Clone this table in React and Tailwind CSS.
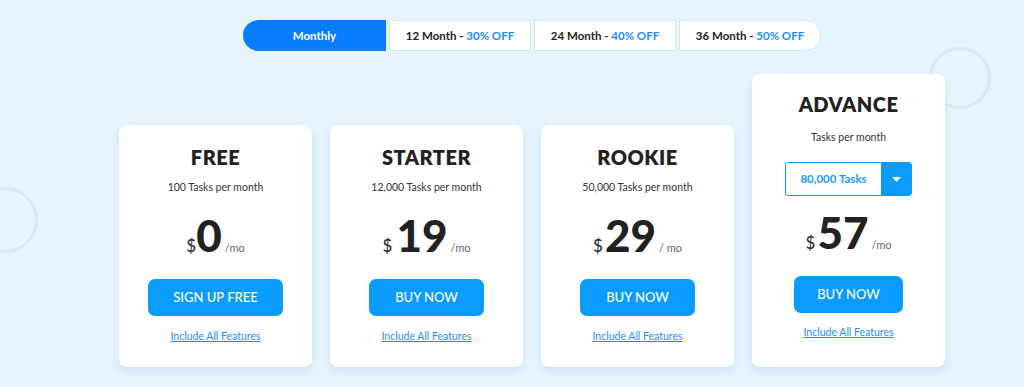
import React from "react"

function Price({ amount, dollarGap = "", per = "/mo" }) {
  return (
    <div className="flex items-baseline h-[44px] leading-[44px] text-[#222]">
      <span className={`text-[17px] font-medium text-[#333] ${dollarGap}`}>$</span>
      <span className="text-[44px] font-black">{amount}</span>
      <span className="ml-[3px] text-[11px] text-[#5b6686]">{per}</span>
    </div>
  )
}

function PlanCard({ title, tasks, amount, per, button, btnWidth, dollarGap }) {
  return (
    <div className="w-[193px] h-[242px] bg-white rounded-[8px] shadow-[0_4px_8px_rgba(150,190,225,0.35)] flex flex-col items-center pt-[22px]">
      <h2 className="text-[20px] leading-[20px] font-extrabold text-[#222] tracking-[0.5px]">{title}</h2>
      <p className="mt-[13px] text-[10.5px] leading-[14px] text-[#333]">{tasks}</p>
      <div className="mt-[19px]">
        <Price amount={amount} per={per} dollarGap={dollarGap} />
      </div>
      <button className={`mt-[22px] h-[37px] ${btnWidth} rounded-[7px] bg-[#0a9bff] text-white text-[13px] font-medium`}>
        {button}
      </button>
      <a href="#" className="mt-[13px] text-[10.5px] leading-[14px] text-[#1a8cff] underline">
        Include All Features
      </a>
    </div>
  )
}

export default function App() {
  return (
    <div className="relative w-full h-[387px] overflow-hidden bg-[#e6f4fe] font-['Lato',sans-serif]">
      {/* decorative rings */}
      <div className="absolute left-[-28px] top-[187px] w-[66px] h-[66px] rounded-full border-[3px] border-[#dae8f3]"></div>
      <div className="absolute left-[929px] top-[47px] w-[62px] h-[62px] rounded-full border-[3px] border-[#dae8f3]"></div>

      <div className="relative flex flex-col items-center pl-[40px] pt-[20px]">
        {/* billing tabs */}
        <div className="flex gap-[3px] text-[11.5px] font-bold">
          <button className="w-[143px] h-[31px] rounded-l-full bg-[#0a7cff] text-white">Monthly</button>
          <button className="w-[142px] h-[31px] bg-white border border-[#d6e6f3] text-[#222]">
            12 Month - <span className="text-[#1a8cff]">30% OFF</span>
          </button>
          <button className="w-[142px] h-[31px] bg-white border border-[#d6e6f3] text-[#222]">
            24 Month - <span className="text-[#1a8cff]">40% OFF</span>
          </button>
          <button className="w-[142px] h-[31px] rounded-r-full bg-white border border-[#d6e6f3] text-[#222]">
            36 Month - <span className="text-[#1a8cff]">50% OFF</span>
          </button>
        </div>

        {/* plans */}
        <div className="mt-[23px] flex items-end gap-[18px]">
          <PlanCard title="FREE" tasks="100 Tasks per month" amount="0" button="SIGN UP FREE" btnWidth="w-[135px]" />
          <PlanCard title="STARTER" tasks="12,000 Tasks per month" amount="19" button="BUY NOW" btnWidth="w-[115px]" dollarGap="mr-[4px]" />
          <PlanCard title="ROOKIE" tasks="50,000 Tasks per month" amount="29" per="/ mo" button="BUY NOW" btnWidth="w-[115px]" dollarGap="mr-[2px]" />

          <div className="w-[193px] h-[293px] bg-white rounded-[8px] shadow-[0_4px_8px_rgba(150,190,225,0.35)] flex flex-col items-center pt-[20px]">
            <h2 className="text-[20px] leading-[20px] font-extrabold text-[#222] tracking-[0.5px]">ADVANCE</h2>
            <p className="mt-[16px] text-[10.5px] leading-[14px] text-[#333]">Tasks per month</p>
            <div className="mt-[18px] flex w-[127px] h-[34px] border border-[#0a9bff] rounded-[3px] overflow-hidden">
              <div className="flex-1 flex items-center justify-center text-[11.5px] font-bold text-[#1a9bff]">80,000 Tasks</div>
              <div className="w-[30px] bg-[#0a9bff] flex items-center justify-center">
                <svg width="9" height="5" viewBox="0 0 9 5">
                  <path d="M0 0h9L4.5 5z" fill="white" />
                </svg>
              </div>
            </div>
            <div className="mt-[14px]">
              <Price amount="57" per="/mo" dollarGap="mr-[2px]" />
            </div>
            <button className="mt-[22px] h-[37px] w-[109px] rounded-[7px] bg-[#0a9bff] text-white text-[13px] font-medium">
              BUY NOW
            </button>
            <a href="#" className="mt-[12px] text-[10.5px] leading-[14px] text-[#1a8cff] underline">
              Include All Features
            </a>
          </div>
        </div>
      </div>
    </div>
  )
}
